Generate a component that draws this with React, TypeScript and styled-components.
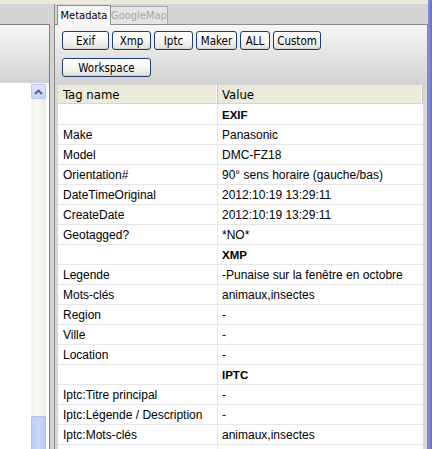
import React from "react";
import styled, { createGlobalStyle } from "styled-components";

interface IRow {
  tag: string;
  value: string;
  section?: boolean;
}

interface ITab {
  active?: boolean;
  w: number;
}

interface IButton {
  w: number;
}

const rows: IRow[] = [
  { tag: "", value: "EXIF", section: true },
  { tag: "Make", value: "Panasonic" },
  { tag: "Model", value: "DMC-FZ18" },
  { tag: "Orientation#", value: "90° sens horaire (gauche/bas)" },
  { tag: "DateTimeOriginal", value: "2012:10:19 13:29:11" },
  { tag: "CreateDate", value: "2012:10:19 13:29:11" },
  { tag: "Geotagged?", value: "*NO*" },
  { tag: "", value: "XMP", section: true },
  { tag: "Legende", value: "-Punaise sur la fenêtre en octobre" },
  { tag: "Mots-clés", value: "animaux,insectes" },
  { tag: "Region", value: "-" },
  { tag: "Ville", value: "-" },
  { tag: "Location", value: "-" },
  { tag: "", value: "IPTC", section: true },
  { tag: "Iptc:Titre principal", value: "-" },
  { tag: "Iptc:Légende / Description", value: "-" },
  { tag: "Iptc:Mots-clés", value: "animaux,insectes" },
  { tag: "", value: "" },
];

const filterButtons = [
  { label: "Exif", w: 47 },
  { label: "Xmp", w: 39 },
  { label: "Iptc", w: 39 },
  { label: "Maker", w: 41 },
  { label: "ALL", w: 30 },
  { label: "Custom", w: 48 },
];

export default function App() {
  return (
    <>
      <GlobalStyle />
      <Window>
        <Main>
          <TopStrip />
          <Body>
            <LeftPane>
              <LeftBox>
                <LeftHeader />
                <LeftList>
                  <ScrollBar>
                    <ScrollButton>
                      <svg width="9" height="6" viewBox="0 0 9 6">
                        <polyline
                          points="1,5 4.5,1.5 8,5"
                          fill="none"
                          stroke="#4d6185"
                          strokeWidth="1.8"
                        />
                      </svg>
                    </ScrollButton>
                    <ScrollTrack />
                    <ScrollThumb />
                  </ScrollBar>
                </LeftList>
              </LeftBox>
            </LeftPane>
            <Splitter />
            <RightPane>
              <TabStrip>
                <Tab active w={54}>
                  Metadata
                </Tab>
                <Tab w={57}>GoogleMap</Tab>
              </TabStrip>
              <Panel>
                <Toolbar>
                  <ButtonRow>
                    {filterButtons.map((b) => (
                      <XpButton key={b.label} w={b.w}>
                        {b.label}
                      </XpButton>
                    ))}
                  </ButtonRow>
                  <ButtonRow>
                    <XpButton w={89}>Workspace</XpButton>
                  </ButtonRow>
                </Toolbar>
                <TableArea>
                  <Table>
                    <HeaderCell>Tag name</HeaderCell>
                    <HeaderCell>Value</HeaderCell>
                    {rows.map((row, index) => (
                      <React.Fragment key={index}>
                        <TagCell>{row.tag}</TagCell>
                        <ValueCell section={row.section}>{row.value}</ValueCell>
                      </React.Fragment>
                    ))}
                  </Table>
                </TableArea>
              </Panel>
            </RightPane>
          </Body>
        </Main>
        <BlueEdge />
      </Window>
    </>
  );
}

const GlobalStyle = createGlobalStyle`
  html, body {
    margin: 0;
    padding: 0;
    background: #d4d4d4;
    overflow: hidden;
  }
`;

const Window = styled.div`
  display: flex;
  width: 432px;
  height: 449px;
  overflow: hidden;
  background: #d4d4d4;
`;

const Main = styled.div`
  flex: 1;
  display: flex;
  flex-direction: column;
  min-width: 0;
`;

const TopStrip = styled.div`
  height: 4px;
  background: #ece9d8;
  flex-shrink: 0;
`;

const Body = styled.div`
  flex: 1;
  display: flex;
  min-height: 0;
`;

const LeftPane = styled.div`
  width: 50px;
  padding-top: 20px;
  display: flex;
  flex-direction: column;
  box-sizing: border-box;
`;

const LeftBox = styled.div`
  flex: 1;
  display: flex;
  flex-direction: column;
  border-top: 1px solid #7c7c7c;
  border-right: 1px solid #7c7c7c;
  min-height: 0;
`;

const LeftHeader = styled.div`
  height: 58px;
  background: linear-gradient(#f6f6f6, #e6e6e6 50%, #d2d2d2);
  flex-shrink: 0;
`;

const LeftList = styled.div`
  flex: 1;
  display: flex;
  justify-content: flex-end;
  background: #ffffff;
  padding-right: 3px;
  min-height: 0;
`;

const ScrollBar = styled.div`
  width: 15px;
  display: flex;
  flex-direction: column;
  background: linear-gradient(90deg, #f3f2ec, #fbfbf8 40%, #eeede6);
`;

const ScrollButton = styled.div`
  height: 15px;
  margin: 1px 0 0 0;
  display: flex;
  align-items: center;
  justify-content: center;
  border: 1px solid #b7c8f0;
  border-radius: 2px;
  background: linear-gradient(#dfe8fe, #c4d4fb);
  box-sizing: border-box;
`;

const ScrollTrack = styled.div`
  flex: 1;
`;

const ScrollThumb = styled.div`
  height: 32px;
  background: linear-gradient(90deg, #bccefa, #c7d6fd 50%, #bccdf8);
  border: 1px solid #adc1f3;
  border-radius: 2px 2px 0 0;
  border-bottom: none;
`;

const Splitter = styled.div`
  width: 4px;
  background: #d4d4d4;
`;

const RightPane = styled.div`
  width: 374px;
  display: flex;
  flex-direction: column;
  border-left: 1px solid #8a8a8a;
  box-sizing: border-box;
`;

const TabStrip = styled.div`
  height: 20px;
  display: flex;
  align-items: flex-end;
  padding-left: 2px;
  flex-shrink: 0;
`;

const Tab = styled.div<ITab>`
  width: ${(p) => p.w}px;
  height: ${(p) => (p.active ? "20px" : "18px")};
  margin-bottom: ${(p) => (p.active ? "-1px" : "0")};
  display: flex;
  align-items: center;
  justify-content: center;
  box-sizing: border-box;
  font-family: "DejaVu Sans Condensed", "DejaVu Sans", sans-serif;
  font-stretch: condensed;
  font-size: 11px;
  white-space: nowrap;
  color: ${(p) => (p.active ? "#000000" : "#a6a6a6")};
  background: ${(p) => (p.active ? "#f7f7f7" : "#e4e4e4")};
  border: 1px solid ${(p) => (p.active ? "#8c8c8c" : "#a8a8a8")};
  border-bottom: none;
  border-left-width: ${(p) => (p.active ? "1px" : "0")};
  position: relative;
  z-index: ${(p) => (p.active ? 1 : 0)};
`;

const Panel = styled.div`
  flex: 1;
  display: flex;
  flex-direction: column;
  border-top: 1px solid #8c8c8c;
  border-right: 1px solid #8c8c8c;
  min-height: 0;
  background: #d8d8d8;
`;

const Toolbar = styled.div`
  height: 60px;
  box-sizing: border-box;
  padding: 6px 0 0 7px;
  display: flex;
  flex-direction: column;
  gap: 8px;
  background: linear-gradient(#f6f6f6, #e4e4e4 50%, #d2d2d2);
  flex-shrink: 0;
`;

const ButtonRow = styled.div`
  display: flex;
  gap: 3px;
`;

const XpButton = styled.button<IButton>`
  width: ${(p) => p.w}px;
  height: 19px;
  padding: 0;
  display: flex;
  align-items: center;
  justify-content: center;
  font-family: "DejaVu Sans Condensed", "DejaVu Sans", sans-serif;
  font-stretch: condensed;
  font-size: 11.5px;
  color: #000000;
  border: 1px solid #1d3f6e;
  border-radius: 3px;
  background: linear-gradient(#ffffff, #f3f3ef 60%, #e2e0d8);
  box-shadow: inset 0 -1px 0 #d6d2c6;
`;

const TableArea = styled.div`
  flex: 1;
  padding: 0 4px 0 3px;
  min-height: 0;
  overflow: hidden;
  background: #d8d8d8;
`;

const Table = styled.div`
  display: grid;
  grid-template-columns: 160px 205px;
  grid-auto-rows: 20px;
  background: #ffffff;
`;

const HeaderCell = styled.div`
  height: 19px;
  display: flex;
  align-items: center;
  padding-left: 5px;
  box-sizing: border-box;
  font-family: "DejaVu Sans Condensed", "DejaVu Sans", sans-serif;
  font-stretch: condensed;
  font-size: 13px;
  color: #000000;
  background: #ebeadb;
  border-bottom: 1px solid #d8d5c4;
  border-right: 1px solid #c6c3b1;
  box-shadow: inset -1px 0 0 #ffffff;

  &:nth-child(2) {
    padding-left: 4px;
  }
`;

const TagCell = styled.div`
  display: flex;
  align-items: center;
  padding-left: 5px;
  box-sizing: border-box;
  font-family: "Liberation Sans", Arial, sans-serif;
  font-size: 12px;
  color: #000000;
  white-space: nowrap;
  overflow: hidden;
  border-bottom: 1px solid #e6e6e6;
  border-right: 1px solid #e6e6e6;
`;

const ValueCell = styled.div<{ section?: boolean }>`
  display: flex;
  align-items: center;
  padding-left: 4px;
  box-sizing: border-box;
  font-family: "Liberation Sans", Arial, sans-serif;
  font-size: ${(p) => (p.section ? "11.5px" : "12px")};
  font-weight: ${(p) => (p.section ? 700 : 400)};
  color: #000000;
  white-space: nowrap;
  overflow: hidden;
  border-bottom: 1px solid #e6e6e6;
`;

const BlueEdge = styled.div`
  width: 4px;
  background: linear-gradient(90deg, #8890dc, #6570d6);
`;
